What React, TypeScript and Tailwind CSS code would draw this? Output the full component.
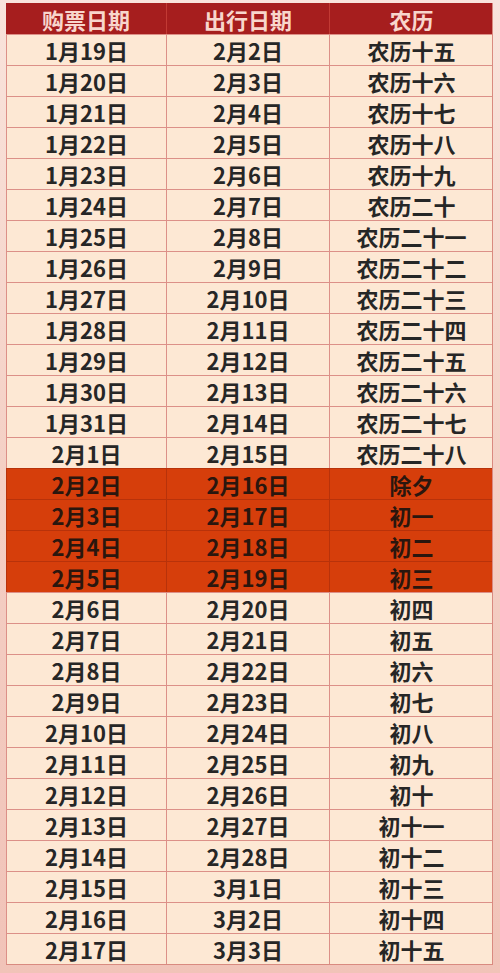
import React from 'react';

interface Row {
  buy: string;
  travel: string;
  lunar: string;
  hot?: boolean;
}

const rows: Row[] = [
  { buy: '1月19日', travel: '2月2日', lunar: '农历十五' },
  { buy: '1月20日', travel: '2月3日', lunar: '农历十六' },
  { buy: '1月21日', travel: '2月4日', lunar: '农历十七' },
  { buy: '1月22日', travel: '2月5日', lunar: '农历十八' },
  { buy: '1月23日', travel: '2月6日', lunar: '农历十九' },
  { buy: '1月24日', travel: '2月7日', lunar: '农历二十' },
  { buy: '1月25日', travel: '2月8日', lunar: '农历二十一' },
  { buy: '1月26日', travel: '2月9日', lunar: '农历二十二' },
  { buy: '1月27日', travel: '2月10日', lunar: '农历二十三' },
  { buy: '1月28日', travel: '2月11日', lunar: '农历二十四' },
  { buy: '1月29日', travel: '2月12日', lunar: '农历二十五' },
  { buy: '1月30日', travel: '2月13日', lunar: '农历二十六' },
  { buy: '1月31日', travel: '2月14日', lunar: '农历二十七' },
  { buy: '2月1日', travel: '2月15日', lunar: '农历二十八' },
  { buy: '2月2日', travel: '2月16日', lunar: '除夕', hot: true },
  { buy: '2月3日', travel: '2月17日', lunar: '初一', hot: true },
  { buy: '2月4日', travel: '2月18日', lunar: '初二', hot: true },
  { buy: '2月5日', travel: '2月19日', lunar: '初三', hot: true },
  { buy: '2月6日', travel: '2月20日', lunar: '初四' },
  { buy: '2月7日', travel: '2月21日', lunar: '初五' },
  { buy: '2月8日', travel: '2月22日', lunar: '初六' },
  { buy: '2月9日', travel: '2月23日', lunar: '初七' },
  { buy: '2月10日', travel: '2月24日', lunar: '初八' },
  { buy: '2月11日', travel: '2月25日', lunar: '初九' },
  { buy: '2月12日', travel: '2月26日', lunar: '初十' },
  { buy: '2月13日', travel: '2月27日', lunar: '初十一' },
  { buy: '2月14日', travel: '2月28日', lunar: '初十二' },
  { buy: '2月15日', travel: '3月1日', lunar: '初十三' },
  { buy: '2月16日', travel: '3月2日', lunar: '初十四' },
  { buy: '2月17日', travel: '3月3日', lunar: '初十五' },
];

export default function App() {
  return (
    <div
      className="w-[500px] h-[973px] bg-gradient-to-b from-[#f9e4dc] via-[#f4cfc4] to-[#f1c3b8] pt-[3px] pl-[6px]"
      style={{ fontFamily: '"Noto Sans CJK SC", "Noto Sans", sans-serif' }}
    >
      <div className="w-[487px] border-r border-b border-[#d98a80]">
        {/* 表头 */}
        <div className="grid grid-cols-[161px_163px_163px] h-[31px] bg-[#a61e1e] text-[#f8d6cc] text-[22px] font-bold leading-none">
          <div className="flex items-center justify-center border-r border-[#c23a34]">购票日期</div>
          <div className="flex items-center justify-center border-r border-[#c23a34]">出行日期</div>
          <div className="flex items-center justify-center">农历</div>
        </div>

        {rows.map((r) => (
          <div
            key={r.buy}
            className={`grid grid-cols-[161px_163px_163px] h-[31px] border-t text-[22px] font-bold leading-none ${
              r.hot
                ? 'bg-[#d63e0b] border-[#b8320a] text-[#2a160e]'
                : 'bg-[#fde8d4] border-[#dc9088] text-[#262626]'
            }`}
          >
            <div className={`flex items-center justify-center border-l border-r ${r.hot ? 'border-[#b8320a]' : 'border-[#dc9088]'}`}>
              {r.buy}
            </div>
            <div className={`flex items-center justify-center border-r ${r.hot ? 'border-[#b8320a]' : 'border-[#dc9088]'}`}>
              {r.travel}
            </div>
            <div className="flex items-center justify-center">{r.lunar}</div>
          </div>
        ))}
      </div>
    </div>
  );
}
